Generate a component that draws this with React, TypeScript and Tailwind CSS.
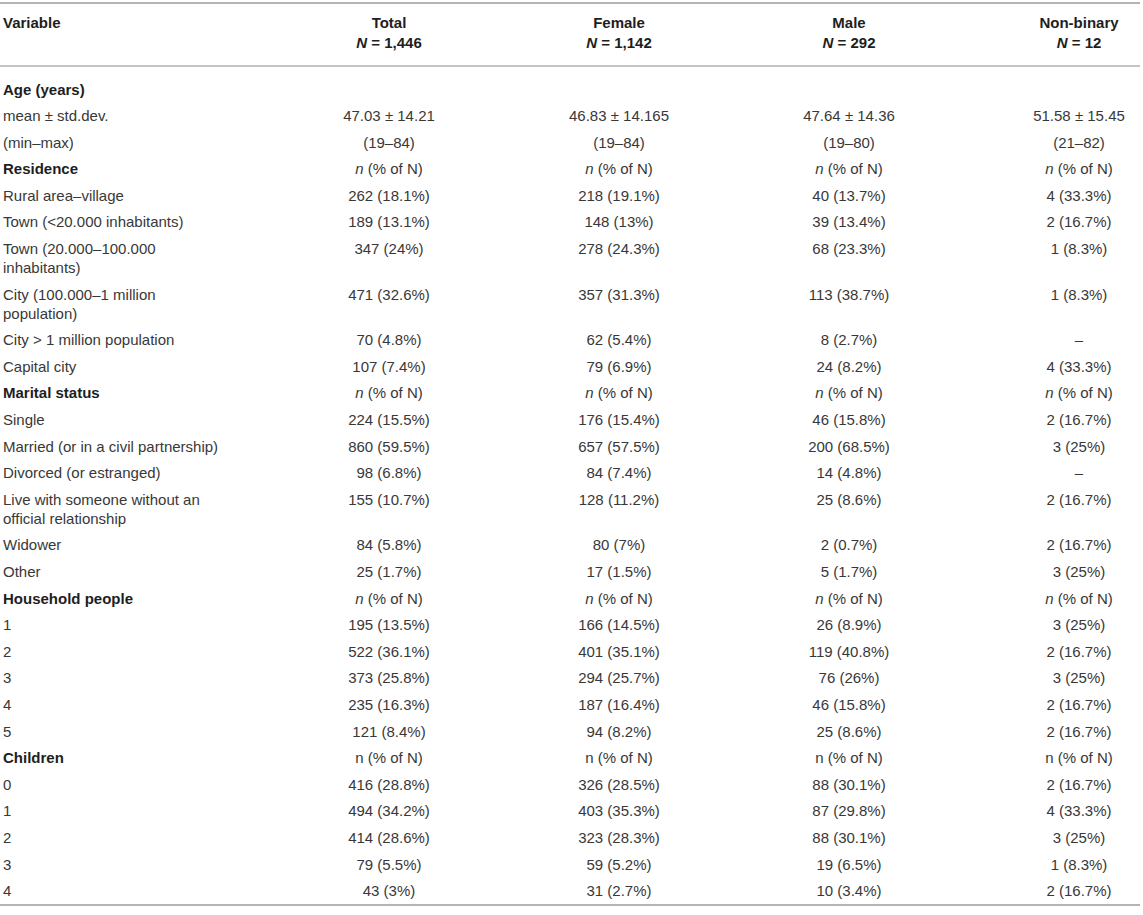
import React from 'react';

type Row = {
  label: string;
  bold?: boolean;
  nHead?: 'italic' | 'plain';
  cells?: string[];
};

const cols = [
  { name: 'Total', n: '1,446' },
  { name: 'Female', n: '1,142' },
  { name: 'Male', n: '292' },
  { name: 'Non-binary', n: '12' },
];

const rows: Row[] = [
  { label: 'Age (years)', bold: true },
  { label: 'mean ± std.dev.', cells: ['47.03 ± 14.21', '46.83 ± 14.165', '47.64 ± 14.36', '51.58 ± 15.45'] },
  { label: '(min–max)', cells: ['(19–84)', '(19–84)', '(19–80)', '(21–82)'] },
  { label: 'Residence', bold: true, nHead: 'italic' },
  { label: 'Rural area–village', cells: ['262 (18.1%)', '218 (19.1%)', '40 (13.7%)', '4 (33.3%)'] },
  { label: 'Town (<20.000 inhabitants)', cells: ['189 (13.1%)', '148 (13%)', '39 (13.4%)', '2 (16.7%)'] },
  { label: 'Town (20.000–100.000 inhabitants)', cells: ['347 (24%)', '278 (24.3%)', '68 (23.3%)', '1 (8.3%)'] },
  { label: 'City (100.000–1 million population)', cells: ['471 (32.6%)', '357 (31.3%)', '113 (38.7%)', '1 (8.3%)'] },
  { label: 'City > 1 million population', cells: ['70 (4.8%)', '62 (5.4%)', '8 (2.7%)', '–'] },
  { label: 'Capital city', cells: ['107 (7.4%)', '79 (6.9%)', '24 (8.2%)', '4 (33.3%)'] },
  { label: 'Marital status', bold: true, nHead: 'italic' },
  { label: 'Single', cells: ['224 (15.5%)', '176 (15.4%)', '46 (15.8%)', '2 (16.7%)'] },
  { label: 'Married (or in a civil partnership)', cells: ['860 (59.5%)', '657 (57.5%)', '200 (68.5%)', '3 (25%)'] },
  { label: 'Divorced (or estranged)', cells: ['98 (6.8%)', '84 (7.4%)', '14 (4.8%)', '–'] },
  { label: 'Live with someone without an official relationship', cells: ['155 (10.7%)', '128 (11.2%)', '25 (8.6%)', '2 (16.7%)'] },
  { label: 'Widower', cells: ['84 (5.8%)', '80 (7%)', '2 (0.7%)', '2 (16.7%)'] },
  { label: 'Other', cells: ['25 (1.7%)', '17 (1.5%)', '5 (1.7%)', '3 (25%)'] },
  { label: 'Household people', bold: true, nHead: 'italic' },
  { label: '1', cells: ['195 (13.5%)', '166 (14.5%)', '26 (8.9%)', '3 (25%)'] },
  { label: '2', cells: ['522 (36.1%)', '401 (35.1%)', '119 (40.8%)', '2 (16.7%)'] },
  { label: '3', cells: ['373 (25.8%)', '294 (25.7%)', '76 (26%)', '3 (25%)'] },
  { label: '4', cells: ['235 (16.3%)', '187 (16.4%)', '46 (15.8%)', '2 (16.7%)'] },
  { label: '5', cells: ['121 (8.4%)', '94 (8.2%)', '25 (8.6%)', '2 (16.7%)'] },
  { label: 'Children', bold: true, nHead: 'plain' },
  { label: '0', cells: ['416 (28.8%)', '326 (28.5%)', '88 (30.1%)', '2 (16.7%)'] },
  { label: '1', cells: ['494 (34.2%)', '403 (35.3%)', '87 (29.8%)', '4 (33.3%)'] },
  { label: '2', cells: ['414 (28.6%)', '323 (28.3%)', '88 (30.1%)', '3 (25%)'] },
  { label: '3', cells: ['79 (5.5%)', '59 (5.2%)', '19 (6.5%)', '1 (8.3%)'] },
  { label: '4', cells: ['43 (3%)', '31 (2.7%)', '10 (3.4%)', '2 (16.7%)'] },
];

function NCell({ kind }: { kind: 'italic' | 'plain' }) {
  return (
    <>
      {kind === 'italic' ? <i>n</i> : 'n'} (% of N)
    </>
  );
}

export default function App() {
  return (
    <div className="min-h-screen bg-white pt-[2px] font-['Liberation_Sans',Arial,sans-serif] text-[15px] text-[#383838]">
      <div className="w-[1140px] border-y-2 border-[#b4b4b4]">
        <table className="w-full table-fixed border-collapse">
          <colgroup>
            <col className="w-[274px]" />
            <col className="w-[230px]" />
            <col className="w-[230px]" />
            <col className="w-[230px]" />
            <col />
          </colgroup>
          <thead>
            <tr className="border-b-2 border-[#c4c4c4] align-top font-bold text-[#1e1e1e]">
              <th className="pl-[3px] pr-[46px] pt-[9px] pb-[12px] text-left leading-[20px]">Variable</th>
              {cols.map((c, i) => (
                <th key={c.name} className={`pt-[9px] pb-[12px] text-center leading-[20px] ${i === 3 ? 'pl-[54px]' : ''}`}>
                  <div>{c.name}</div>
                  <div>
                    <i>N</i> = {c.n}
                  </div>
                </th>
              ))}
            </tr>
          </thead>
          <tbody>
            {rows.map((r, idx) => {
              const first = idx === 0;
              const pad = first ? 'pt-[12.5px] pb-[3.8px]' : 'py-[3.8px]';
              return (
                <tr key={idx} className="align-top leading-[19px]">
                  <td className={`pl-[3px] pr-[46px] ${pad} ${r.bold ? 'font-bold text-[#1e1e1e]' : ''}`}>{r.label}</td>
                  {[0, 1, 2, 3].map((k) => (
                    <td key={k} className={`${pad} text-center ${k === 3 ? 'pl-[54px]' : ''}`}>
                      {r.nHead ? <NCell kind={r.nHead} /> : r.cells ? r.cells[k] : ''}
                    </td>
                  ))}
                </tr>
              );
            })}
          </tbody>
        </table>
      </div>
    </div>
  );
}
